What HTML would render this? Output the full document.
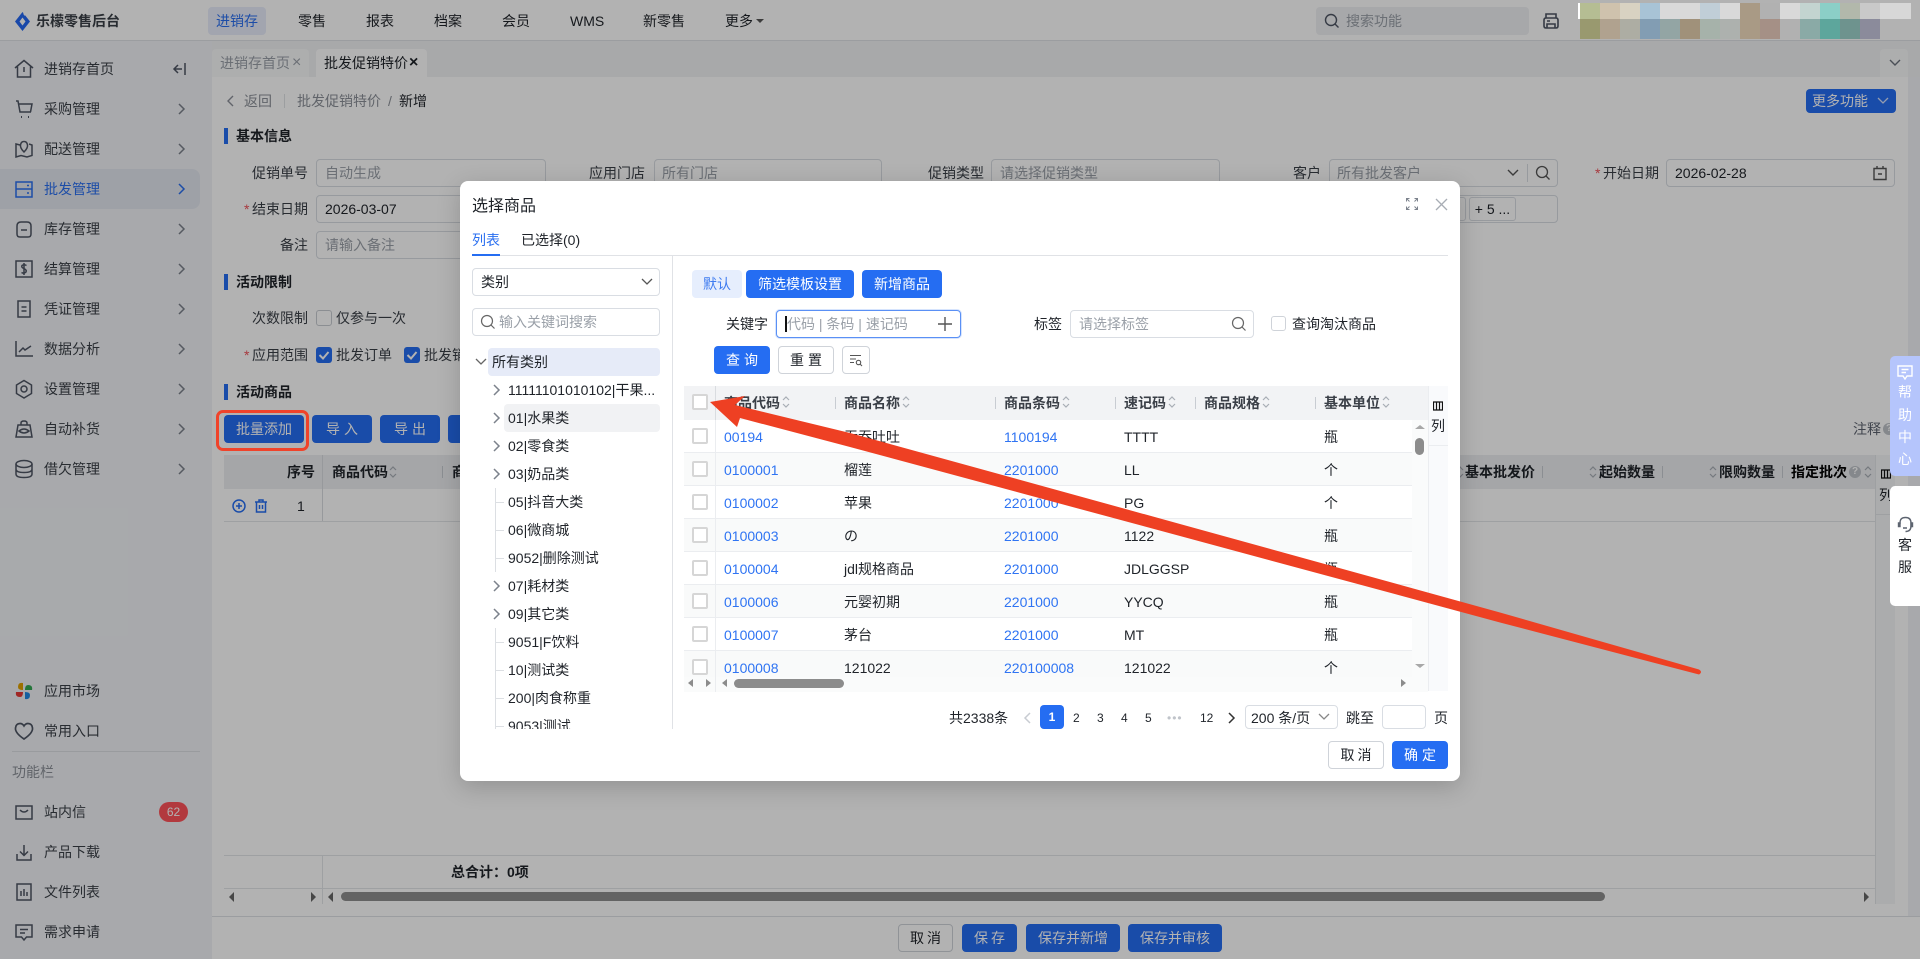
<!DOCTYPE html>
<html lang="zh-CN">
<head>
<meta charset="utf-8">
<title>乐檬零售后台</title>
<style>
*{margin:0;padding:0}
html,body{width:1920px;height:959px;overflow:hidden;background:#fff}
body{font-family:"Liberation Sans","Noto Sans CJK SC",sans-serif;font-size:14px;line-height:20px;color:#1f2329;position:relative}
.a{position:absolute}
.t{position:absolute;white-space:nowrap;line-height:20px}
.g{color:#9aa0a8}
.m{color:#5d6470}
.l{color:#3a3f47}
.bl{color:#2a6ff0}
.b{font-weight:bold}
.in{position:absolute;box-sizing:border-box;border:1px solid #d9dde3;border-radius:4px;background:#fff;height:28px}
.btn{position:absolute;box-sizing:border-box;height:28px;border-radius:4px;background:#256df2;color:#fff;text-align:center;line-height:28px;white-space:nowrap}
.ol{background:#fff;border:1px solid #cfd3d9;color:#1f2329;line-height:26px}
.ck{position:absolute;box-sizing:border-box;width:16px;height:16px;border:2px solid #d6d6d6;border-radius:2px;background:#fff}
.cb{position:absolute;width:16px;height:16px;border-radius:3px;background:#256df2}
.ic{position:absolute;width:20px;height:20px;fill:none;stroke:#4e5564;stroke-width:1.5}
.ch{position:absolute;width:10px;height:14px;fill:none;stroke:#7c828c;stroke-width:1.5}
.so{position:absolute;width:8px;height:14px;fill:none;stroke:#a8adb5;stroke-width:1.2}
.sep{position:absolute;width:1px;height:12px;background:#c8ccd2}
.row{position:absolute;left:684px;width:728px;height:33px;box-sizing:border-box;border-bottom:1px solid #ebedf0;background:#fff}
.row.e{background:#f9fafa}
.row .ck{left:8px;top:8px}
.row i{position:absolute;left:31px;top:0;width:1px;height:33px;background:#ebedf0}
.row span{position:absolute;top:7px;white-space:nowrap}
.row .c{left:40px;color:#2f74f3}
.row .n{left:160px}
.row .d{left:320px;color:#2f74f3}
.row .q{left:440px}
.row .u{left:640px}
.tk{position:absolute;left:496px;width:8px;height:1px;background:#dcdfe3}
.q{position:absolute;width:12px;height:12px;border-radius:50%;background:#bfc3c9;color:#fff;font-size:10px;line-height:12px;text-align:center;font-weight:bold}
</style>
</head>
<body>
<svg width="0" height="0" style="position:absolute">
<symbol id="so" viewBox="0 0 8 14"><path d="M1 5L4 2L7 5M1 9L4 12L7 9"/></symbol>
<symbol id="cr" viewBox="0 0 10 14"><path d="M3 2L8 7L3 12"/></symbol>
<symbol id="cd" viewBox="0 0 14 10"><path d="M2 2L7 7L12 2"/></symbol>
<symbol id="mg" viewBox="0 0 16 16"><circle cx="7" cy="7" r="5.5"/><path d="M11 11L14.5 14.5"/></symbol>
</svg>

<!-- ============ PAGE UNDER MASK ============ -->
<div class="a" style="left:0;top:0;width:1920px;height:959px;background:#fff">
  <!-- top bar -->
  <div class="a" style="left:0;top:0;width:1920px;height:40px;background:#fff;border-bottom:1px solid #dfe1e5"></div>
  <svg class="a" style="left:15px;top:12px" width="15" height="19" viewBox="0 0 15 19"><path fill-rule="evenodd" d="M7.500 0L15 9.500L7.500 19L0 9.500ZM7.500 5.500L4.500 9.500L7.500 13.500L10.500 9.500Z" fill="#2468f2"/><path d="M8.500 1.500L10 3.500" stroke="#fff" stroke-width="1"/></svg>
  <span class="t b" style="left:36px;top:11px;color:#3a3f47">乐檬零售后台</span>
  <div class="a" style="left:208px;top:7px;width:58px;height:28px;border-radius:4px;background:#e8ecfb"></div>
  <span class="t bl" style="left:216px;top:11px">进销存</span>
  <span class="t" style="left:298px;top:11px">零售</span>
  <span class="t" style="left:366px;top:11px">报表</span>
  <span class="t" style="left:434px;top:11px">档案</span>
  <span class="t" style="left:502px;top:11px">会员</span>
  <span class="t" style="left:570px;top:11px">WMS</span>
  <span class="t" style="left:643px;top:11px">新零售</span>
  <span class="t" style="left:725px;top:11px">更多</span>
  <div class="a" style="left:756px;top:19px;border:4px solid transparent;border-top:4px solid #555;width:0;height:0"></div>
  <div class="a" style="left:1316px;top:7px;width:213px;height:28px;border-radius:4px;background:#f0f1f4"></div>
  <svg class="a" style="left:1324px;top:13px;fill:none;stroke:#4e5564;stroke-width:1.4" width="16" height="16"><use href="#mg"/></svg>
  <span class="t g" style="left:1346px;top:11px">搜索功能</span>
  <svg class="ic" style="left:1541px;top:11px;stroke-width:1.6" viewBox="0 0 20 20"><path d="M5 7V3H15V7M3 15V9Q3 7 5 7H15Q17 7 17 9V15Q17 17 15 17H5Q3 17 3 15ZM6 13H14V17H6ZM6 10H9"/></svg>

  <!-- sidebar -->
  <div class="a" style="left:0;top:41px;width:212px;height:918px;background:#f1f3f6"></div>
  <div class="a" style="left:0;top:169px;width:200px;height:40px;border-radius:0 8px 8px 0;background:#e3e7f0"></div>

  <svg class="ic" style="left:14px;top:59px" viewBox="0 0 20 20"><path d="M1 9L10 1.5L19 9M3.500 7.500V18H16.500V7.500M10 8V13"/></svg>
  <span class="t l" style="left:44px;top:59px">进销存首页</span>
  <svg class="a" style="left:172px;top:62px;fill:none;stroke:#4e5564;stroke-width:1.5" width="16" height="14" viewBox="0 0 16 14"><path d="M13 1V13M10 7H2M6 3L2 7L6 11"/></svg>

  <svg class="ic" style="left:14px;top:99px" viewBox="0 0 20 20"><path d="M2 2H4L6 13H17M5 5H18L16.500 13"/><path d="M7 18H8M14 18H15" stroke-width="2"/></svg>
  <span class="t l" style="left:44px;top:99px">采购管理</span>
  <svg class="ch" style="left:176px;top:102px"><use href="#cr"/></svg>

  <svg class="ic" style="left:14px;top:139px" viewBox="0 0 20 20"><path d="M6 6L2 5V18L7 16.500L13 18L18 16.500V6L15 5M10 13Q6 9 6.500 6Q7 2.500 10 2.500Q13 2.500 13.500 6Q14 9 10 13Z"/></svg>
  <span class="t l" style="left:44px;top:139px">配送管理</span>
  <svg class="ch" style="left:176px;top:142px"><use href="#cr"/></svg>

  <svg class="ic" style="left:14px;top:179px;stroke:#2a6ff0" viewBox="0 0 20 20"><path d="M2 3H18V18H2ZM2 10H18M13 6.500H15M13 14H15"/></svg>
  <span class="t bl" style="left:44px;top:179px">批发管理</span>
  <svg class="ch" style="left:176px;top:182px;stroke:#2a6ff0"><use href="#cr"/></svg>

  <svg class="ic" style="left:14px;top:219px" viewBox="0 0 20 20"><path d="M3 7Q3 3 7 3H13Q17 3 17 7V15Q17 18 14 18H6Q3 18 3 15ZM7 11H13"/></svg>
  <span class="t l" style="left:44px;top:219px">库存管理</span>
  <svg class="ch" style="left:176px;top:222px"><use href="#cr"/></svg>

  <svg class="ic" style="left:14px;top:259px" viewBox="0 0 20 20"><path d="M2 2H18V18H2ZM12.500 6.500Q10 5 8 6.500Q7 8.500 10 9.500Q13 11 12 13Q10 15 7.500 13.500M10 4V16"/></svg>
  <span class="t l" style="left:44px;top:259px">结算管理</span>
  <svg class="ch" style="left:176px;top:262px"><use href="#cr"/></svg>

  <svg class="ic" style="left:14px;top:299px" viewBox="0 0 20 20"><path d="M4 2H16V18H4ZM7.500 8H12.500M7.500 12H12.500"/></svg>
  <span class="t l" style="left:44px;top:299px">凭证管理</span>
  <svg class="ch" style="left:176px;top:302px"><use href="#cr"/></svg>

  <svg class="ic" style="left:14px;top:339px" viewBox="0 0 20 20"><path d="M2 2V17H19M5 13L9 9L11 11L17 7"/></svg>
  <span class="t l" style="left:44px;top:339px">数据分析</span>
  <svg class="ch" style="left:176px;top:342px"><use href="#cr"/></svg>

  <svg class="ic" style="left:14px;top:379px" viewBox="0 0 20 20"><path d="M10 1.500L17.500 6V14.500L10 19L2.500 14.500V6Z"/><circle cx="10" cy="10" r="3"/></svg>
  <span class="t l" style="left:44px;top:379px">设置管理</span>
  <svg class="ch" style="left:176px;top:382px"><use href="#cr"/></svg>

  <svg class="ic" style="left:14px;top:419px" viewBox="0 0 20 20"><path d="M7 6V4Q7 2 10 2Q13 2 13 4V6M4 6H16L18 18H2ZM5 12Q10 8 15 12Q10 16 5 12Z"/></svg>
  <span class="t l" style="left:44px;top:419px">自动补货</span>
  <svg class="ch" style="left:176px;top:422px"><use href="#cr"/></svg>

  <svg class="ic" style="left:14px;top:459px" viewBox="0 0 20 20"><ellipse cx="10" cy="5" rx="8" ry="3.500"/><path d="M2 5V15Q2 18.500 10 18.500Q18 18.500 18 15V5M2 10Q2 13.500 10 13.500Q18 13.500 18 10"/></svg>
  <span class="t l" style="left:44px;top:459px">借欠管理</span>
  <svg class="ch" style="left:176px;top:462px"><use href="#cr"/></svg>

  <svg class="a" style="left:14px;top:681px" width="20" height="20" viewBox="0 0 20 20"><path d="M9 9V2Q4 1 4 6Q4 9 9 9Z" fill="#e0a100"/><path d="M11 9H18Q19 4 14 4Q11 4 11 9Z" fill="#34a853"/><path d="M9 11H2Q1 16 6 16Q9 16 9 11Z" fill="#e53935"/><path d="M11 11V18Q16 19 16 14Q16 11 11 11Z" fill="#1e88e5"/></svg>
  <span class="t l" style="left:44px;top:681px">应用市场</span>
  <svg class="ic" style="left:14px;top:721px;stroke-width:1.7" viewBox="0 0 20 20"><path d="M10 18Q1 12 1.500 7Q2 2.500 6 2.500Q8.500 2.500 10 5Q11.500 2.500 14 2.500Q18 2.500 18.500 7Q19 12 10 18Z"/></svg>
  <span class="t l" style="left:44px;top:721px">常用入口</span>
  <div class="a" style="left:12px;top:751px;width:188px;height:1px;background:#dcdee3"></div>
  <span class="t" style="left:12px;top:762px;color:#8b9098">功能栏</span>
  <svg class="ic" style="left:14px;top:802px" viewBox="0 0 20 20"><path d="M2 4H18V17H2ZM6 8Q10 12 14 8"/></svg>
  <span class="t l" style="left:44px;top:802px">站内信</span>
  <div class="a" style="left:159px;top:802px;width:29px;height:20px;border-radius:10px;background:#ff525a;color:#fff;font-size:12px;text-align:center;line-height:20px">62</div>
  <svg class="ic" style="left:14px;top:842px" viewBox="0 0 20 20"><path d="M3 12V18H17V12M10 3V13M6 9.500L10 13.500L14 9.500"/></svg>
  <span class="t l" style="left:44px;top:842px">产品下载</span>
  <svg class="ic" style="left:14px;top:882px" viewBox="0 0 20 20"><path d="M3 2H17V18H3ZM7 9V14M10 7V14M13 10V14"/></svg>
  <span class="t l" style="left:44px;top:882px">文件列表</span>
  <svg class="ic" style="left:14px;top:922px" viewBox="0 0 20 20"><path d="M2 3H18V15H12.500L10 18L7.500 15H2ZM6 7.500H14M6 11H11"/></svg>
  <span class="t l" style="left:44px;top:922px">需求申请</span>

  <!-- tabs -->
  <div class="a" style="left:212px;top:41px;width:1708px;height:36px;background:#f1f2f4"></div>
  <div class="a" style="left:212px;top:49px;width:97px;height:28px;background:#f8f9fa;border-radius:4px 4px 0 0"></div>
  <span class="t g" style="left:220px;top:53px">进销存首页</span>
  <span class="t g" style="left:292px;top:53px;font-size:16px">×</span>
  <div class="a" style="left:316px;top:49px;width:111px;height:28px;background:#fff;border-radius:4px 4px 0 0"></div>
  <span class="t" style="left:324px;top:53px">批发促销特价</span>
  <span class="t b" style="left:409px;top:53px;font-size:16px">×</span>
  <div class="a" style="left:1880px;top:49px;width:28px;height:28px;background:#f8f9fa;border-radius:4px 4px 0 0"></div>
  <svg class="a" style="left:1888px;top:58px;fill:none;stroke:#6b717b;stroke-width:1.4" width="14" height="10"><use href="#cd"/></svg>

  <!-- content -->
  <div class="a" style="left:1908px;top:77px;width:12px;height:840px;background:#f1f3f6"></div>
  <svg class="a" style="left:226px;top:94px;fill:none;stroke:#8b9098;stroke-width:1.4" width="10" height="14" viewBox="0 0 10 14"><path d="M7 2L2 7L7 12"/></svg>
  <span class="t m" style="left:244px;top:91px;color:#8b9098">返回</span>
  <div class="a" style="left:284px;top:94px;width:1px;height:14px;background:#e0e2e6"></div>
  <span class="t" style="left:297px;top:91px;color:#8b9098">批发促销特价</span>
  <span class="t" style="left:388px;top:91px;color:#8b9098">/</span>
  <span class="t" style="left:399px;top:91px">新增</span>
  <div class="btn" style="left:1806px;top:89px;width:90px;height:24px;line-height:24px;text-align:left;padding-left:6px">更多功能</div>
  <svg class="a" style="left:1876px;top:96px;fill:none;stroke:#d5e1fb;stroke-width:1.3" width="14" height="10"><use href="#cd"/></svg>

  <div class="a" style="left:224px;top:128px;width:4px;height:16px;background:#256df2"></div>
  <span class="t b" style="left:236px;top:126px">基本信息</span>

  <span class="t l" style="left:252px;top:163px">促销单号</span>
  <div class="in" style="left:316px;top:159px;width:230px"></div>
  <span class="t g" style="left:325px;top:163px">自动生成</span>
  <span class="t l" style="left:589px;top:163px">应用门店</span>
  <div class="in" style="left:654px;top:159px;width:228px"></div>
  <span class="t g" style="left:662px;top:163px">所有门店</span>
  <span class="t l" style="left:928px;top:163px">促销类型</span>
  <div class="in" style="left:991px;top:159px;width:229px"></div>
  <span class="t g" style="left:1000px;top:163px">请选择促销类型</span>
  <span class="t l" style="left:1293px;top:163px">客户</span>
  <div class="in" style="left:1329px;top:159px;width:229px"></div>
  <span class="t g" style="left:1337px;top:163px">所有批发客户</span>
  <svg class="a" style="left:1506px;top:168px;fill:none;stroke:#555;stroke-width:1.4" width="14" height="10"><use href="#cd"/></svg>
  <div class="a" style="left:1527px;top:164px;width:1px;height:18px;background:#d9dde3"></div>
  <svg class="a" style="left:1535px;top:165px;fill:none;stroke:#555;stroke-width:1.3" width="16" height="16"><use href="#mg"/></svg>
  <span class="t" style="left:1595px;top:163px;color:#f0525a">*</span>
  <span class="t l" style="left:1603px;top:163px">开始日期</span>
  <div class="in" style="left:1666px;top:159px;width:229px"></div>
  <span class="t" style="left:1675px;top:163px">2026-02-28</span>
  <svg class="a" style="left:1872px;top:165px;fill:none;stroke:#555;stroke-width:1.4" width="16" height="16" viewBox="0 0 16 16"><path d="M2 3.500H14V14.500H2ZM5 1V3.500M11 1V3.500M6 9H10"/></svg>

  <span class="t" style="left:244px;top:199px;color:#f0525a">*</span>
  <span class="t l" style="left:252px;top:199px">结束日期</span>
  <div class="in" style="left:316px;top:195px;width:230px"></div>
  <span class="t" style="left:325px;top:199px">2026-03-07</span>
  <div class="in" style="left:1329px;top:195px;width:229px"></div>
  <div class="a" style="left:1469px;top:197px;width:47px;height:24px;box-sizing:border-box;border:1px solid #d9dde3;border-radius:3px;text-align:center;line-height:22px">+ 5 ...</div>
  <div class="a" style="left:1440px;top:197px;width:26px;height:24px;box-sizing:border-box;border:1px solid #d9dde3;border-radius:3px"></div>

  <span class="t l" style="left:280px;top:235px">备注</span>
  <div class="in" style="left:316px;top:231px;width:230px"></div>
  <span class="t g" style="left:325px;top:235px">请输入备注</span>

  <div class="a" style="left:224px;top:274px;width:4px;height:16px;background:#256df2"></div>
  <span class="t b" style="left:236px;top:272px">活动限制</span>

  <span class="t l" style="left:252px;top:308px">次数限制</span>
  <div class="ck" style="left:316px;top:310px;border-width:1px;border-color:#c8ccd2;border-radius:3px"></div>
  <span class="t l" style="left:336px;top:308px">仅参与一次</span>

  <span class="t" style="left:244px;top:345px;color:#f0525a">*</span>
  <span class="t l" style="left:252px;top:345px">应用范围</span>
  <svg class="cb" style="left:316px;top:347px" viewBox="0 0 16 16"><path d="M3.500 8L7 11.500L12.500 5" fill="none" stroke="#fff" stroke-width="2"/></svg>
  <span class="t l" style="left:336px;top:345px">批发订单</span>
  <svg class="cb" style="left:404px;top:347px" viewBox="0 0 16 16"><path d="M3.500 8L7 11.500L12.500 5" fill="none" stroke="#fff" stroke-width="2"/></svg>
  <span class="t l" style="left:424px;top:345px">批发销售</span>

  <div class="a" style="left:224px;top:384px;width:4px;height:16px;background:#256df2"></div>
  <span class="t b" style="left:236px;top:382px">活动商品</span>

  <div class="btn" style="left:224px;top:415px;width:80px">批量添加</div>
  <div class="btn" style="left:312px;top:415px;width:60px;letter-spacing:4px;text-indent:4px">导入</div>
  <div class="btn" style="left:380px;top:415px;width:60px;letter-spacing:4px;text-indent:4px">导出</div>
  <div class="btn" style="left:448px;top:415px;width:40px"></div>
  <span class="t m" style="left:1853px;top:419px">注释</span>
  <div class="q" style="left:1883px;top:423px">?</div>

  <!-- main table -->
  <div class="a" style="left:224px;top:455px;width:1651px;height:34px;background:#eceef1"></div>
  <div class="a" style="left:224px;top:521px;width:1651px;height:1px;background:#e3e5e8"></div>
  <div class="a" style="left:322px;top:455px;width:1px;height:66px;background:#d9dce0"></div>
  <span class="t b" style="left:287px;top:462px">序号</span>
  <span class="t b" style="left:332px;top:462px">商品代码</span>
  <svg class="so" style="left:389px;top:465px"><use href="#so"/></svg>
  <div class="sep" style="left:442px;top:466px"></div>
  <span class="t b" style="left:452px;top:462px">商品名称</span>
  <svg class="so" style="left:1456px;top:465px"><use href="#so"/></svg>
  <span class="t b" style="left:1465px;top:462px">基本批发价</span>
  <div class="sep" style="left:1542px;top:466px"></div>
  <svg class="so" style="left:1589px;top:465px"><use href="#so"/></svg>
  <span class="t b" style="left:1599px;top:462px">起始数量</span>
  <div class="sep" style="left:1662px;top:466px"></div>
  <svg class="so" style="left:1709px;top:465px"><use href="#so"/></svg>
  <span class="t b" style="left:1719px;top:462px">限购数量</span>
  <div class="sep" style="left:1782px;top:466px"></div>
  <span class="t b" style="left:1791px;top:462px;color:#000">指定批次</span>
  <div class="q" style="left:1849px;top:466px">?</div>
  <svg class="so" style="left:1864px;top:465px"><use href="#so"/></svg>
  <div class="a" style="left:1875px;top:455px;width:20px;height:449px;background:#f5f6f8;border-left:1px solid #e3e5e8;box-sizing:border-box"></div>
  <div class="a" style="left:1876px;top:514px;width:19px;height:1px;background:#e3e5e8"></div>
  <svg class="a" style="left:1881px;top:469px;fill:none;stroke:#111;stroke-width:1.200" width="10" height="10" viewBox="0 0 10 10"><path d="M0.500 1H9.500V9H0.500ZM3.500 1V9M6.500 1V9"/></svg>
  <span class="t" style="left:1879px;top:485px">列</span>
  <svg class="a" style="left:232px;top:499px;fill:none;stroke:#256df2;stroke-width:1.5" width="14" height="14" viewBox="0 0 14 14"><circle cx="7" cy="7" r="6"/><path d="M4 7H10M7 4V10"/></svg>
  <svg class="a" style="left:254px;top:499px;fill:none;stroke:#256df2;stroke-width:1.5" width="14" height="14" viewBox="0 0 14 14"><path d="M1 3H13M5 3V1H9V3M2.500 3V13H11.500V3M5.500 6V10M8.500 6V10"/></svg>
  <span class="t" style="left:297px;top:496px">1</span>
  <div class="a" style="left:224px;top:855px;width:1651px;height:1px;background:#e3e5e8"></div>
  <div class="a" style="left:322px;top:856px;width:1px;height:48px;background:#e3e5e8"></div>
  <span class="t b" style="left:451px;top:862px">总合计：0项</span>
  <div class="a" style="left:224px;top:888px;width:1651px;height:1px;background:#e3e5e8"></div>
  <div class="a" style="left:229px;top:892px;border:5px solid transparent;border-right:5px solid #666;border-left:0"></div>
  <div class="a" style="left:311px;top:892px;border:5px solid transparent;border-left:5px solid #666;border-right:0"></div>
  <div class="a" style="left:328px;top:892px;border:5px solid transparent;border-right:5px solid #666;border-left:0"></div>
  <div class="a" style="left:341px;top:892px;width:1264px;height:9px;border-radius:5px;background:#8e8e8e"></div>
  <div class="a" style="left:1864px;top:892px;border:5px solid transparent;border-left:5px solid #666;border-right:0"></div>

  <!-- footer -->
  <div class="a" style="left:212px;top:916px;width:1708px;height:1px;background:#dfe1e5"></div>
  <div class="btn ol" style="left:898px;top:924px;width:55px;letter-spacing:3px;text-indent:3px">取消</div>
  <div class="btn" style="left:962px;top:924px;width:55px;letter-spacing:3px;text-indent:3px">保存</div>
  <div class="btn" style="left:1026px;top:924px;width:94px">保存并新增</div>
  <div class="btn" style="left:1128px;top:924px;width:94px">保存并审核</div>
</div>

<!-- mask -->
<div class="a" style="left:0;top:0;width:1920px;height:959px;background:rgba(0,0,0,.3)"></div>

<!-- mosaic -->
<div class="a" style="left:1578px;top:3px;width:2px;height:16px;background:#fff"></div>
<div class="a" style="left:1580px;top:3px;height:16px;display:flex">
  <div style="width:20px;background:#b5bd93"></div><div style="width:20px;background:#cfc2ad"></div><div style="width:20px;background:#d8d2c2"></div><div style="width:20px;background:#a8c3d6"></div><div style="width:20px;background:#d9d9d9"></div><div style="width:20px;background:#d9d9d9"></div><div style="width:20px;background:#c0ced7"></div><div style="width:20px;background:#d9d9d9"></div><div style="width:20px;background:#a99a85"></div><div style="width:20px;background:#b1b1b1"></div><div style="width:20px;background:#d9d9d9"></div><div style="width:20px;background:#c3d4d0"></div><div style="width:20px;background:#8bcfc7"></div><div style="width:20px;background:#b2b8ab"></div><div style="width:20px;background:#c9c9c9"></div><div style="width:31px;background:#d7d7d7"></div>
</div>
<div class="a" style="left:1580px;top:19px;height:20px;display:flex">
  <div style="width:20px;background:#99996f"></div><div style="width:20px;background:#b0a28f"></div><div style="width:20px;background:#adada3"></div><div style="width:20px;background:#829db3"></div><div style="width:20px;background:#93a5a4"></div><div style="width:20px;background:#a0917a"></div><div style="width:20px;background:#a6b2aa"></div><div style="width:20px;background:#adb1ae"></div><div style="width:20px;background:#a99a85"></div><div style="width:20px;background:#a59086"></div><div style="width:20px;background:#b1b1b1"></div><div style="width:20px;background:#8aaaa6"></div><div style="width:20px;background:#5da69c"></div><div style="width:20px;background:#6e938e"></div><div style="width:20px;background:#8b8b9b"></div>
</div>

<!-- red outline -->
<div class="a" style="left:216px;top:410px;width:93px;height:41px;box-sizing:border-box;border:3px solid #f0432a;border-radius:7px"></div>

<!-- help float -->
<div class="a" style="left:1890px;top:356px;width:30px;height:120px;background:#b5c5fc;border-radius:5px 0 0 5px"></div>
<svg class="a" style="left:1897px;top:365px;fill:none;stroke:#fff;stroke-width:1.4" width="16" height="15" viewBox="0 0 16 15"><path d="M1 1H15V11H10L8 14L6 11H1ZM4.500 4.500H11.500M4.500 7.500H9"/></svg>
<span class="t" style="left:1898px;top:382px;color:#fff">帮</span>
<span class="t" style="left:1898px;top:405px;color:#fff">助</span>
<span class="t" style="left:1898px;top:427px;color:#fff">中</span>
<span class="t" style="left:1898px;top:449px;color:#fff">心</span>
<div class="a" style="left:1890px;top:486px;width:30px;height:120px;background:#fff;border-radius:5px 0 0 5px"></div>
<svg class="a" style="left:1897px;top:516px;fill:none;stroke:#5d6470;stroke-width:1.4" width="17" height="17" viewBox="0 0 17 17"><path d="M3 8V7Q3 1.500 8.500 1.500Q14 1.500 14 7V10Q14 15.500 8.500 15.500M6 12H10"/><path d="M1.500 7H3V10.500H1.500ZM14 7H15.500V10.500H14Z" fill="#5d6470"/></svg>
<span class="t" style="left:1898px;top:535px">客</span>
<span class="t" style="left:1898px;top:557px">服</span>

<!-- ============ MODAL ============ -->
<div class="a" style="left:460px;top:181px;width:1000px;height:600px;background:#fff;border-radius:8px;box-shadow:0 6px 24px rgba(0,0,0,.18)"></div>
<span class="t" style="left:472px;top:197px;font-size:16px">选择商品</span>
<svg class="a" style="left:1406px;top:198px;fill:none;stroke:#7c828c;stroke-width:1" width="12" height="12" viewBox="0 0 12 12"><path d="M0.500 3.500V0.500H3.500M8.500 0.500H11.500V3.500M11.500 8.500V11.500H8.500M3.500 11.500H0.500V8.500M1 1L3.500 3.500M11 1L8.500 3.500M11 11L8.500 8.500M1 11L3.500 8.500"/></svg>
<svg class="a" style="left:1435px;top:198px;fill:none;stroke:#a8adb5;stroke-width:1.3" width="13" height="13" viewBox="0 0 13 13"><path d="M1 1L12 12M12 1L1 12"/></svg>
<span class="t bl" style="left:472px;top:230px">列表</span>
<span class="t" style="left:521px;top:230px">已选择(0)</span>
<div class="a" style="left:472px;top:255px;width:976px;height:1px;background:#e0e2e6"></div>
<div class="a" style="left:472px;top:254px;width:28px;height:2px;background:#256df2"></div>
<div class="a" style="left:672px;top:256px;width:1px;height:473px;background:#e0e2e6"></div>

<!-- left panel -->
<div class="in" style="left:472px;top:268px;width:188px"></div>
<span class="t" style="left:481px;top:272px">类别</span>
<svg class="a" style="left:640px;top:277px;fill:none;stroke:#555;stroke-width:1.3" width="14" height="10"><use href="#cd"/></svg>
<div class="in" style="left:472px;top:308px;width:188px"></div>
<svg class="a" style="left:480px;top:314px;fill:none;stroke:#666;stroke-width:1.200" width="16" height="16"><use href="#mg"/></svg>
<span class="t g" style="left:499px;top:312px">输入关键词搜索</span>
<div class="a" style="left:488px;top:348px;width:172px;height:28px;border-radius:4px;background:#e6ebf8"></div>
<svg class="a" style="left:474px;top:357px;fill:none;stroke:#666;stroke-width:1.300" width="14" height="10"><use href="#cd"/></svg>
<span class="t" style="left:492px;top:352px">所有类别</span>
<div class="a" style="left:504px;top:404px;width:156px;height:28px;border-radius:4px;background:#f1f2f4"></div>
<svg class="ch" style="left:491px;top:383px"><use href="#cr"/></svg>
<span class="t" style="left:508px;top:380px">11111101010102|干果...</span>
<svg class="ch" style="left:491px;top:411px"><use href="#cr"/></svg>
<span class="t" style="left:508px;top:408px">01|水果类</span>
<svg class="ch" style="left:491px;top:439px"><use href="#cr"/></svg>
<span class="t" style="left:508px;top:436px">02|零食类</span>
<svg class="ch" style="left:491px;top:467px"><use href="#cr"/></svg>
<span class="t" style="left:508px;top:464px">03|奶品类</span>
<div class="a" style="left:495px;top:488px;width:1px;height:84px;background:#dcdfe3"></div>
<div class="tk" style="top:502px"></div><span class="t" style="left:508px;top:492px">05|抖音大类</span>
<div class="tk" style="top:530px"></div><span class="t" style="left:508px;top:520px">06|微商城</span>
<div class="tk" style="top:558px"></div><span class="t" style="left:508px;top:548px">9052|删除测试</span>
<svg class="ch" style="left:491px;top:579px"><use href="#cr"/></svg>
<span class="t" style="left:508px;top:576px">07|耗材类</span>
<svg class="ch" style="left:491px;top:607px"><use href="#cr"/></svg>
<span class="t" style="left:508px;top:604px">09|其它类</span>
<div class="a" style="left:495px;top:628px;width:1px;height:101px;background:#dcdfe3"></div>
<div class="tk" style="top:642px"></div><span class="t" style="left:508px;top:632px">9051|F饮料</span>
<div class="tk" style="top:670px"></div><span class="t" style="left:508px;top:660px">10|测试类</span>
<div class="tk" style="top:698px"></div><span class="t" style="left:508px;top:688px">200|肉食称重</span>
<div class="tk" style="top:726px"></div>
<div class="a" style="left:500px;top:716px;width:160px;height:13px;overflow:hidden"><span class="t" style="left:8px;top:0">9053|测试</span></div>

<!-- right panel top -->
<div class="btn" style="left:692px;top:270px;width:50px;background:#e6eefd;color:#3f7cf0">默认</div>
<div class="btn" style="left:746px;top:270px;width:108px">筛选模板设置</div>
<div class="btn" style="left:862px;top:270px;width:80px">新增商品</div>
<span class="t" style="left:726px;top:314px">关键字</span>
<div class="in" style="left:776px;top:310px;width:185px;border-color:#5a90f5;box-shadow:0 0 0 1px #d6e4fd"></div>
<div class="a" style="left:785px;top:316px;width:2px;height:16px;background:#111"></div>
<span class="t g" style="left:787px;top:314px">代码 | 条码 | 速记码</span>
<svg class="a" style="left:938px;top:317px;fill:none;stroke:#555;stroke-width:1.400" width="14" height="14"><path d="M7 0V14M0 7H14"/></svg>
<span class="t" style="left:1034px;top:314px">标签</span>
<div class="in" style="left:1070px;top:310px;width:184px"></div>
<span class="t g" style="left:1079px;top:314px">请选择标签</span>
<svg class="a" style="left:1231px;top:316px;fill:none;stroke:#666;stroke-width:1.200" width="16" height="16"><use href="#mg"/></svg>
<div class="ck" style="left:1271px;top:316px;width:15px;height:15px;border-width:1px;border-color:#cfd3d9;border-radius:3px"></div>
<span class="t" style="left:1292px;top:314px">查询淘汰商品</span>
<div class="btn" style="left:714px;top:346px;width:56px;letter-spacing:4px;text-indent:4px">查询</div>
<div class="btn ol" style="left:778px;top:346px;width:56px;letter-spacing:4px;text-indent:4px">重置</div>
<div class="btn ol" style="left:842px;top:346px;width:28px"></div>
<svg class="a" style="left:849px;top:353px;fill:none;stroke:#555;stroke-width:1.100" width="14" height="14" viewBox="0 0 14 14"><path d="M1 2.500H12M1 6H7M1 9.500H5"/><circle cx="9.500" cy="9.500" r="2.200"/><path d="M11 11L13 13"/></svg>

<!-- modal table -->
<div class="a" style="left:684px;top:386px;width:744px;height:34px;background:#f2f3f5"></div>
<div class="a" style="left:715px;top:386px;width:1px;height:34px;background:#d9dce0"></div>
<div class="ck" style="left:692px;top:394px"></div>
<span class="t b" style="left:724px;top:393px;color:#3a3f47">商品代码</span>
<svg class="so" style="left:782px;top:395px"><use href="#so"/></svg>
<div class="sep" style="left:835px;top:397px"></div>
<span class="t b" style="left:844px;top:393px;color:#3a3f47">商品名称</span>
<svg class="so" style="left:902px;top:395px"><use href="#so"/></svg>
<div class="sep" style="left:995px;top:397px"></div>
<span class="t b" style="left:1004px;top:393px;color:#3a3f47">商品条码</span>
<svg class="so" style="left:1062px;top:395px"><use href="#so"/></svg>
<div class="sep" style="left:1115px;top:397px"></div>
<span class="t b" style="left:1124px;top:393px;color:#3a3f47">速记码</span>
<svg class="so" style="left:1168px;top:395px"><use href="#so"/></svg>
<div class="sep" style="left:1195px;top:397px"></div>
<span class="t b" style="left:1204px;top:393px;color:#3a3f47">商品规格</span>
<svg class="so" style="left:1262px;top:395px"><use href="#so"/></svg>
<div class="sep" style="left:1315px;top:397px"></div>
<span class="t b" style="left:1324px;top:393px;color:#3a3f47">基本单位</span>
<svg class="so" style="left:1382px;top:395px"><use href="#so"/></svg>

<div class="row" style="top:420px"><div class="ck"></div><i></i><span class="c">00194</span><span class="n">吞吞吐吐</span><span class="d">1100194</span><span class="q2" style="left:440px">TTTT</span><span class="u">瓶</span></div>
<div class="row e" style="top:453px"><div class="ck"></div><i></i><span class="c">0100001</span><span class="n">榴莲</span><span class="d">2201000</span><span class="q2" style="left:440px">LL</span><span class="u">个</span></div>
<div class="row" style="top:486px"><div class="ck"></div><i></i><span class="c">0100002</span><span class="n">苹果</span><span class="d">2201000</span><span class="q2" style="left:440px">PG</span><span class="u">个</span></div>
<div class="row e" style="top:519px"><div class="ck"></div><i></i><span class="c">0100003</span><span class="n">の</span><span class="d">2201000</span><span class="q2" style="left:440px">1122</span><span class="u">瓶</span></div>
<div class="row" style="top:552px"><div class="ck"></div><i></i><span class="c">0100004</span><span class="n">jdl规格商品</span><span class="d">2201000</span><span class="q2" style="left:440px">JDLGGSP</span><span class="u">瓶</span></div>
<div class="row e" style="top:585px"><div class="ck"></div><i></i><span class="c">0100006</span><span class="n">元婴初期</span><span class="d">2201000</span><span class="q2" style="left:440px">YYCQ</span><span class="u">瓶</span></div>
<div class="row" style="top:618px"><div class="ck"></div><i></i><span class="c">0100007</span><span class="n">茅台</span><span class="d">2201000</span><span class="q2" style="left:440px">MT</span><span class="u">瓶</span></div>
<div class="row e" style="top:651px;border-bottom:0"><div class="ck"></div><i></i><span class="c">0100008</span><span class="n">121022</span><span class="d">220100008</span><span class="q2" style="left:440px">121022</span><span class="u">个</span></div>

<!-- modal scrollbars -->
<div class="a" style="left:684px;top:677px;width:728px;height:15px;background:#fafbfb"></div>
<div class="a" style="left:715px;top:677px;width:1px;height:15px;background:#ebedf0"></div>
<div class="a" style="left:688px;top:679px;border:4px solid transparent;border-right:5px solid #8c8c8c;border-left:0"></div>
<div class="a" style="left:706px;top:679px;border:4px solid transparent;border-left:5px solid #8c8c8c;border-right:0"></div>
<div class="a" style="left:722px;top:679px;border:4px solid transparent;border-right:5px solid #8c8c8c;border-left:0"></div>
<div class="a" style="left:734px;top:679px;width:110px;height:9px;border-radius:5px;background:#8c8c8c"></div>
<div class="a" style="left:1401px;top:679px;border:4px solid transparent;border-left:5px solid #8c8c8c;border-right:0"></div>
<div class="a" style="left:1412px;top:420px;width:16px;height:272px;background:#fafbfb"></div>
<div class="a" style="left:1415px;top:425px;border:5px solid transparent;border-bottom:4px solid #a8a8a8;border-top:0"></div>
<div class="a" style="left:1415px;top:438px;width:9px;height:17px;border-radius:5px;background:#8c8c8c"></div>
<div class="a" style="left:1415px;top:664px;border:5px solid transparent;border-top:4px solid #a8a8a8;border-bottom:0"></div>
<div class="a" style="left:1428px;top:386px;width:20px;height:305px;background:#f9fafc;border-left:1px solid #ebedf0;box-sizing:border-box"></div>
<div class="a" style="left:1429px;top:445px;width:19px;height:1px;background:#ebedf0"></div>
<svg class="a" style="left:1433px;top:401px;fill:none;stroke:#111;stroke-width:1.200" width="10" height="10" viewBox="0 0 10 10"><path d="M0.500 1H9.500V9H0.500ZM3.500 1V9M6.500 1V9"/></svg>
<span class="t" style="left:1431px;top:416px">列</span>

<!-- pagination -->
<span class="t" style="left:949px;top:708px">共2338条</span>
<svg class="ch" style="left:1023px;top:711px;stroke:#c8ccd2" viewBox="0 0 10 14"><path d="M7 2L2 7L7 12"/></svg>
<div class="a" style="left:1040px;top:705px;width:24px;height:24px;border-radius:4px;background:#256df2;color:#fff;font-size:12px;font-weight:bold;text-align:center;line-height:24px">1</div>
<span class="t" style="left:1073px;top:708px;font-size:12px">2</span>
<span class="t" style="left:1097px;top:708px;font-size:12px">3</span>
<span class="t" style="left:1121px;top:708px;font-size:12px">4</span>
<span class="t" style="left:1145px;top:708px;font-size:12px">5</span>
<span class="t" style="left:1167px;top:708px;color:#c0c4ca;font-size:12px;letter-spacing:1px">•••</span>
<span class="t" style="left:1200px;top:708px;font-size:12px">12</span>
<svg class="ch" style="left:1226px;top:711px;stroke:#333"><use href="#cr"/></svg>
<div class="in" style="left:1245px;top:705px;width:93px;height:24px"></div>
<span class="t" style="left:1251px;top:708px">200 条/页</span>
<svg class="a" style="left:1317px;top:712px;fill:none;stroke:#888;stroke-width:1.300" width="14" height="10"><use href="#cd"/></svg>
<span class="t" style="left:1346px;top:708px">跳至</span>
<div class="in" style="left:1382px;top:705px;width:44px;height:24px"></div>
<span class="t" style="left:1434px;top:708px">页</span>
<div class="btn ol" style="left:1328px;top:741px;width:56px;letter-spacing:3px;text-indent:3px">取消</div>
<div class="btn" style="left:1392px;top:741px;width:56px;letter-spacing:4px;text-indent:4px">确定</div>

<!-- red arrow -->
<svg class="a" style="left:0;top:0" width="1920" height="959" viewBox="0 0 1920 959">
  <path fill="#ee4023" d="M710 402L745 396L735 405L850 433L1180 524L1500 612.500L1699 669.500Q1703 672 1699 674.500L1500 622.500L1180 536L850 447L740 418L737 427Z"/>
</svg>
</body>
</html>
